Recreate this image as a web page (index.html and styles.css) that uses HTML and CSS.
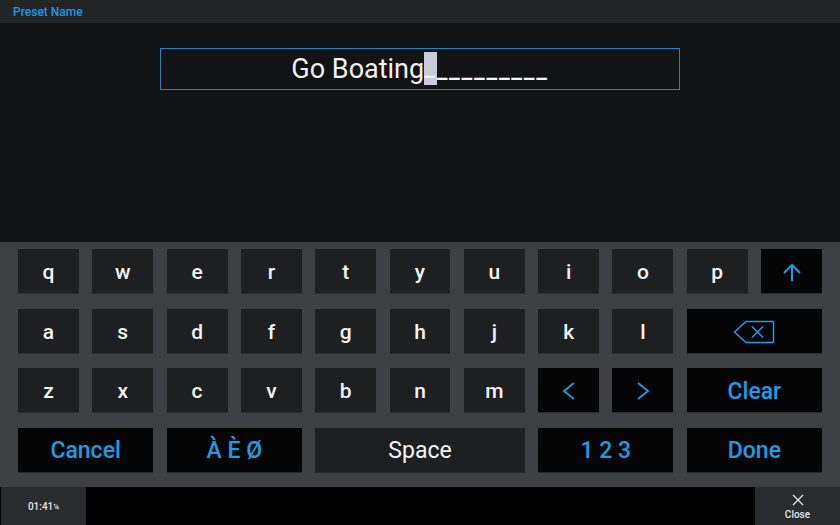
FILE: index.html
```html
<!DOCTYPE html>
<html lang="en">
<head>
    <meta charset="UTF-8">
    <title>Preset Name</title>
    <link rel="stylesheet" href="styles.css">
</head>
<body>
    <div class="header">Preset Name</div>

    <div class="content">
        <div class="name-box">Go Boating<span class="blanks"><span class="cursor">_</span>_________</span></div>
    </div>

    <div class="keyboard">
        <div class="key">q</div>
        <div class="key">w</div>
        <div class="key">e</div>
        <div class="key">r</div>
        <div class="key">t</div>
        <div class="key">y</div>
        <div class="key">u</div>
        <div class="key">i</div>
        <div class="key">o</div>
        <div class="key">p</div>
        <div class="key action">
            <svg width="20" height="20" viewBox="0 0 20 20" fill="none" stroke="currentColor" stroke-width="2"><path d="M10 19V3M2 11l8-8 8 8"/></svg>
        </div>

        <div class="key">a</div>
        <div class="key">s</div>
        <div class="key">d</div>
        <div class="key">f</div>
        <div class="key">g</div>
        <div class="key">h</div>
        <div class="key">j</div>
        <div class="key">k</div>
        <div class="key">l</div>
        <div class="key action span-2">
            <svg width="42" height="24" viewBox="0 0 42 24" fill="none" stroke="currentColor" stroke-width="1.500"><path d="M40.500 1.500H13L1.500 12 13 22.500H40.500zM19 6.500l11 11M30 6.500l-11 11"/></svg>
        </div>

        <div class="key">z</div>
        <div class="key">x</div>
        <div class="key">c</div>
        <div class="key">v</div>
        <div class="key">b</div>
        <div class="key">n</div>
        <div class="key">m</div>
        <div class="key action">
            <svg width="14" height="20" viewBox="0 0 14 20" fill="none" stroke="currentColor" stroke-width="1.800"><path d="M12 2L2 10l10 8"/></svg>
        </div>
        <div class="key action">
            <svg width="14" height="20" viewBox="0 0 14 20" fill="none" stroke="currentColor" stroke-width="1.800"><path d="M2 2l10 8-10 8"/></svg>
        </div>
        <div class="key action span-2">Clear</div>

        <div class="key action span-2">Cancel</div>
        <div class="key action span-2">À È Ø</div>
        <div class="key span-3 space">Space</div>
        <div class="key action span-2">1 2 3</div>
        <div class="key action span-2">Done</div>
    </div>

    <div class="footer">
        <div class="footer-btn time">01:41<span class="time-suffix">¼</span></div>
        <div class="footer-btn close">
            <svg width="12" height="12" viewBox="0 0 12 12" fill="none" stroke="currentColor" stroke-width="1.300"><path d="M1 1l10 10M11 1L1 11"/></svg>
            <span>Close</span>
        </div>
    </div>
</body>
</html>
```

FILE: styles.css
```css
* {
    margin: 0;
    padding: 0;
    box-sizing: border-box;
}

body {
    width: 840px;
    height: 525px;
    overflow: hidden;
    display: flex;
    flex-direction: column;
    font-family: Roboto, "Liberation Sans", sans-serif;
    background-color: #000;
}

.header {
    height: 23px;
    padding-left: 13px;
    background: #232426;
    color: #1b9ae2;
    font-size: 12px;
    font-weight: 500;
    line-height: 24px;
}

.content {
    height: 219px;
    padding-top: 25px;
    background: #121315;
    display: flex;
    justify-content: center;
    align-items: flex-start;
}

.name-box {
    width: 520px;
    height: 42px;
    border: 1px solid #1b86c4;
    color: #f2f2f2;
    font-size: 27px;
    line-height: 41px;
    text-align: center;
    white-space: nowrap;
}

.blanks {
    font-size: 24px;
    font-weight: 500;
    letter-spacing: 1.700px;
}

.cursor {
    background: #c8cbdc;
    display: inline-block;
    height: 33px;
    line-height: 33px;
    vertical-align: top;
    margin-top: 3px;
}

.keyboard {
    height: 245px;
    padding: 7px 18px 0;
    background: #3e3f42;
    display: grid;
    grid-template-columns: repeat(11, 1fr);
    grid-template-rows: repeat(4, 45px);
    column-gap: 13.400px;
    row-gap: 14.600px;
}

.key {
    background: #1e1f21;
    border-bottom: 1px solid #2c2d2f;
    color: #f4f4f4;
    font-size: 21px;
    font-weight: 500;
    padding-top: 2px;
    display: flex;
    justify-content: center;
    align-items: center;
}

.key.action {
    background: #050506;
    color: #1b9de8;
}

.span-2 {
    grid-column: span 2;
    font-size: 23px;
}

.span-3 {
    grid-column: span 3;
    font-size: 23px;
}

.space {
    font-weight: 400;
}

.footer {
    flex: 1;
    display: flex;
    justify-content: space-between;
    background: #000;
}

.footer-btn {
    width: 85px;
    background: #2a2b2f;
    color: #e6e6e6;
    font-size: 10px;
    font-weight: 500;
    display: flex;
    justify-content: center;
    align-items: center;
}

.time {
    margin-left: 1px;
}

.time-suffix {
    font-size: 8px;
}

.close {
    flex-direction: column;
    gap: 3px;
    padding-top: 2px;
}
```
